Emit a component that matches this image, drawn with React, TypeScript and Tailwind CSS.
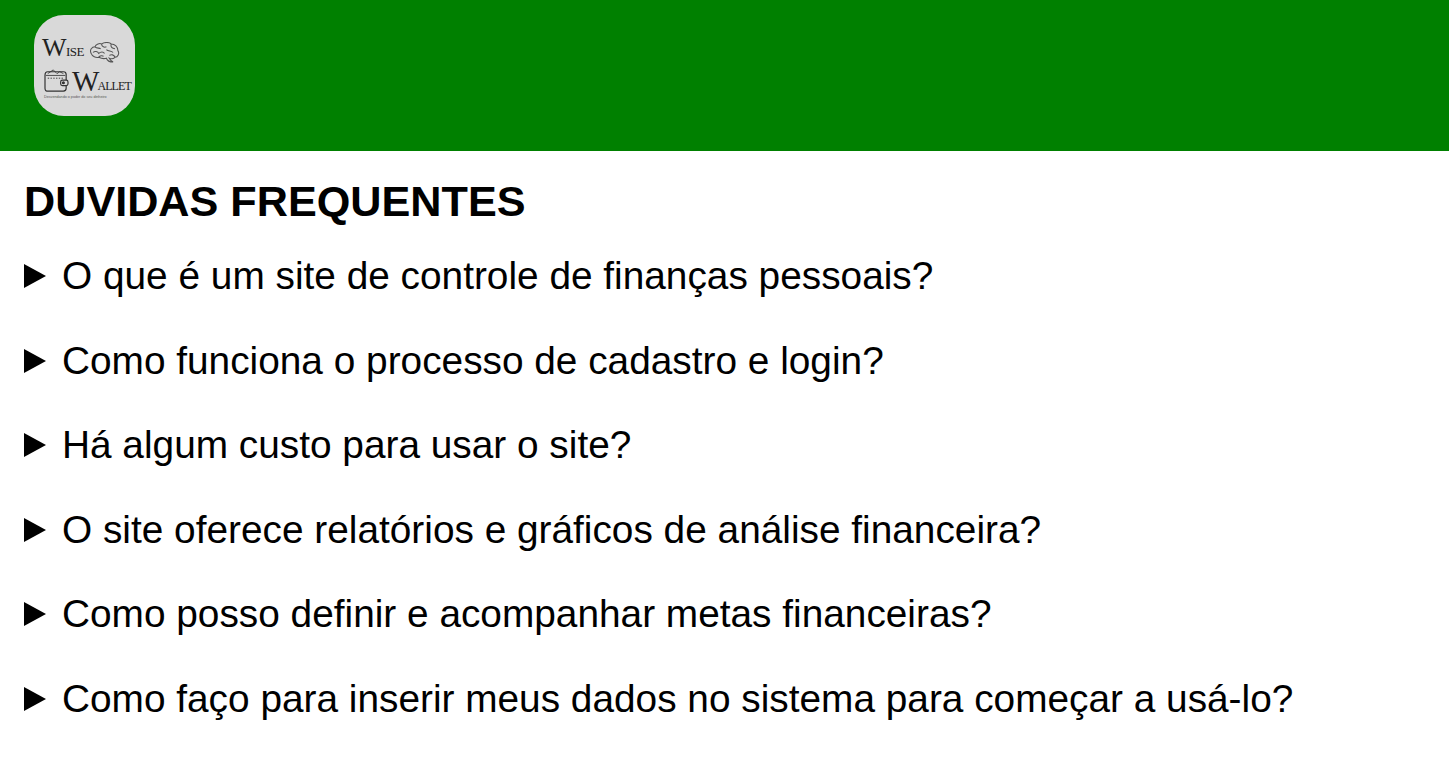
const questions = [
  'O que é um site de controle de finanças pessoais?',
  'Como funciona o processo de cadastro e login?',
  'Há algum custo para usar o site?',
  'O site oferece relatórios e gráficos de análise financeira?',
  'Como posso definir e acompanhar metas financeiras?',
  'Como faço para inserir meus dados no sistema para começar a usá-lo?',
]

function BrainIcon() {
  return (
    <svg width="31" height="21" viewBox="0 0 32 22" fill="none" stroke="#555" strokeWidth="1.1">
      <path d="M2 12C0 8 3 5 6 5C7 2 11 1 13 2C16 0 21 0 23 2C27 2 30 5 30 9C32 12 30 16 27 16C25 18 23 18 21 17C22 19 23 20 25 21C22 21 19 20 18 17C15 18 12 17 10 16C7 17 3 15 2 12Z" />
      <path d="M6 5C8 7 10 6 12 7M13 2C13 5 16 6 18 5M23 2C22 5 24 7 27 7M4 11C6 9 9 10 10 12C12 10 15 10 16 12M18 8C20 10 23 9 25 11M27 16C26 13 23 13 21 14M10 16C11 14 14 14 15 15" />
    </svg>
  )
}

function WalletIcon() {
  return (
    <svg width="27" height="23" viewBox="0 0 27 25" fill="none" stroke="#333" strokeWidth="1.3">
      <path d="M1 7C1 4 2 3 4 3H21C23 3 24 4 24 6V21C24 23 23 24 21 24H3C2 24 1 23 1 21Z" />
      <path d="M2 7H23M4 5L10 1L14 5L17 3L21 5" strokeWidth="0.9" />
      <path d="M4 10H21" strokeWidth="1" strokeDasharray="1.5 1.5" />
      <rect x="18" y="12" width="8" height="6" rx="2" fill="#d9d9d9" />
      <circle cx="21" cy="15" r="1" fill="#333" />
    </svg>
  )
}

function Logo() {
  return (
    <div className="w-[101px] h-[101px] rounded-[30px] bg-[#d9d9d9] overflow-hidden pt-[22px] pl-[8px] text-[#222] font-['Liberation_Serif',serif]">
      <div className="flex items-end h-[20px]">
        <span className="text-[26px] leading-[18px] tracking-[-2.5px]">W</span>
        <span className="text-[13px] leading-[10px] ml-[2px] tracking-[-0.6px]">ISE</span>
        <span className="ml-[5px] mb-[-6px]">
          <BrainIcon />
        </span>
      </div>
      <div className="flex items-end h-[26px] mt-[8px] ml-[1px]">
        <span className="mb-[-1px]">
          <WalletIcon />
        </span>
        <span className="text-[29px] leading-[20px] ml-[2px] tracking-[-2px]">W</span>
        <span className="text-[12px] leading-[10px] tracking-[-0.9px]">ALLET</span>
      </div>
      <div className="text-[3.7px] leading-none mt-[5px] ml-[2px] whitespace-nowrap font-['Liberation_Sans',sans-serif] text-[#555]">
        Desvendando o poder do seu dinheiro
      </div>
    </div>
  )
}

export default function App() {
  return (
    <div className="min-h-screen bg-white text-black font-['Liberation_Sans',Arial,sans-serif]">
      <header className="h-[151px] bg-[#008000] pl-[34px] pt-[15px]">
        <Logo />
      </header>
      <main className="px-[24px]">
        <h1 className="text-[43.2px] leading-[50px] font-bold mt-[25px] mb-[28px]">DUVIDAS FREQUENTES</h1>
        <div className="flex flex-col gap-[40px]">
          {questions.map((q) => (
            <details key={q} className="text-[38.8px] leading-[44.5px]">
              <summary className="flex items-center gap-[16px] list-none cursor-pointer">
                <svg width="22" height="24" viewBox="0 0 22 24" className="shrink-0">
                  <polygon points="0,0 22,12 0,24" fill="#000" />
                </svg>
                <span>{q}</span>
              </summary>
            </details>
          ))}
        </div>
      </main>
    </div>
  )
}
